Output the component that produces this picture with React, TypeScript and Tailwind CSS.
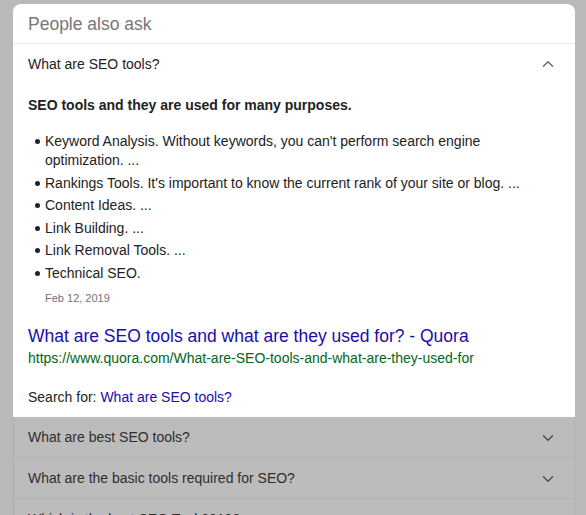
import { ChevronDown, ChevronUp } from 'lucide-react';

const bullets = [
  "Keyword Analysis. Without keywords, you can't perform search engine optimization. ...",
  "Rankings Tools. It's important to know the current rank of your site or blog. ...",
  'Content Ideas. ...',
  'Link Building. ...',
  'Link Removal Tools. ...',
  'Technical SEO.',
];

const related = [
  'What are best SEO tools?',
  'What are the basic tools required for SEO?',
  'Which is the best SEO Tool 2019?',
];

export default function App() {
  return (
    <div
      className="h-[515px] overflow-hidden bg-[#bababa] pt-[4px] pl-[13px] pr-[11px]"
      style={{ fontFamily: '"Liberation Sans", Arial, sans-serif' }}
    >
      {/* Expanded card */}
      <div className="rounded-t-[8px] bg-white">
        <div className="flex h-[40px] items-center border-b border-[#ebebeb] px-[15px] pt-[1px] text-[17.5px] text-[#777777]">
          People also ask
        </div>
        <div className="flex h-[40px] items-center justify-between pl-[15px] pr-[18px] text-[14px] text-[#222]">
          <span>What are SEO tools?</span>
          <ChevronUp className="h-[18px] w-[18px] text-[#5f6368]" strokeWidth={1.75} />
        </div>
        <div className="pl-[15px] pr-[16px] pb-[10px] text-[14px] text-[#222]">
          <p className="pt-[11px] font-bold leading-[20px]">SEO tools and they are used for many purposes.</p>
          <ul className="mt-[17px] flex flex-col gap-[3.5px] pr-[30px]">
            {bullets.map(b => (
              <li key={b} className="flex leading-[19px]">
                <span className="w-[17px] shrink-0">
                  <span className="ml-[7px] mt-[7px] block h-[5px] w-[5px] rounded-full bg-[#222]" />
                </span>
                <span>{b}</span>
              </li>
            ))}
          </ul>
          <div className="mt-[8px] pl-[17px] text-[11px] leading-[14px] text-[#70757a]">Feb 12, 2019</div>
          <a href="#" className="mt-[20px] block text-[17.5px] leading-[22px] text-[#1a0dab]">
            What are SEO tools and what are they used for? - Quora
          </a>
          <div className="mt-[2px] text-[14px] leading-[18px] text-[#006621]">
            https://www.quora.com/What-are-SEO-tools-and-what-are-they-used-for
          </div>
          <div className="mt-[20px] leading-[20px]">
            Search for: <a href="#" className="text-[#1a0dab]">What are SEO tools?</a>
          </div>
        </div>
      </div>
      {/* Dimmed collapsed rows */}
      <div className="border-x border-[#b0b0b0] bg-[#bcbcbc]">
        {related.map(q => (
          <div
            key={q}
            className="flex h-[41px] items-center justify-between border-b border-[#b2b2b2] pl-[14px] pr-[17px] pt-[2px] text-[14px] text-[#2e2e2e]"
          >
            <span>{q}</span>
            <ChevronDown className="h-[18px] w-[18px] text-[#4a4a4a]" strokeWidth={1.75} />
          </div>
        ))}
      </div>
    </div>
  );
}
